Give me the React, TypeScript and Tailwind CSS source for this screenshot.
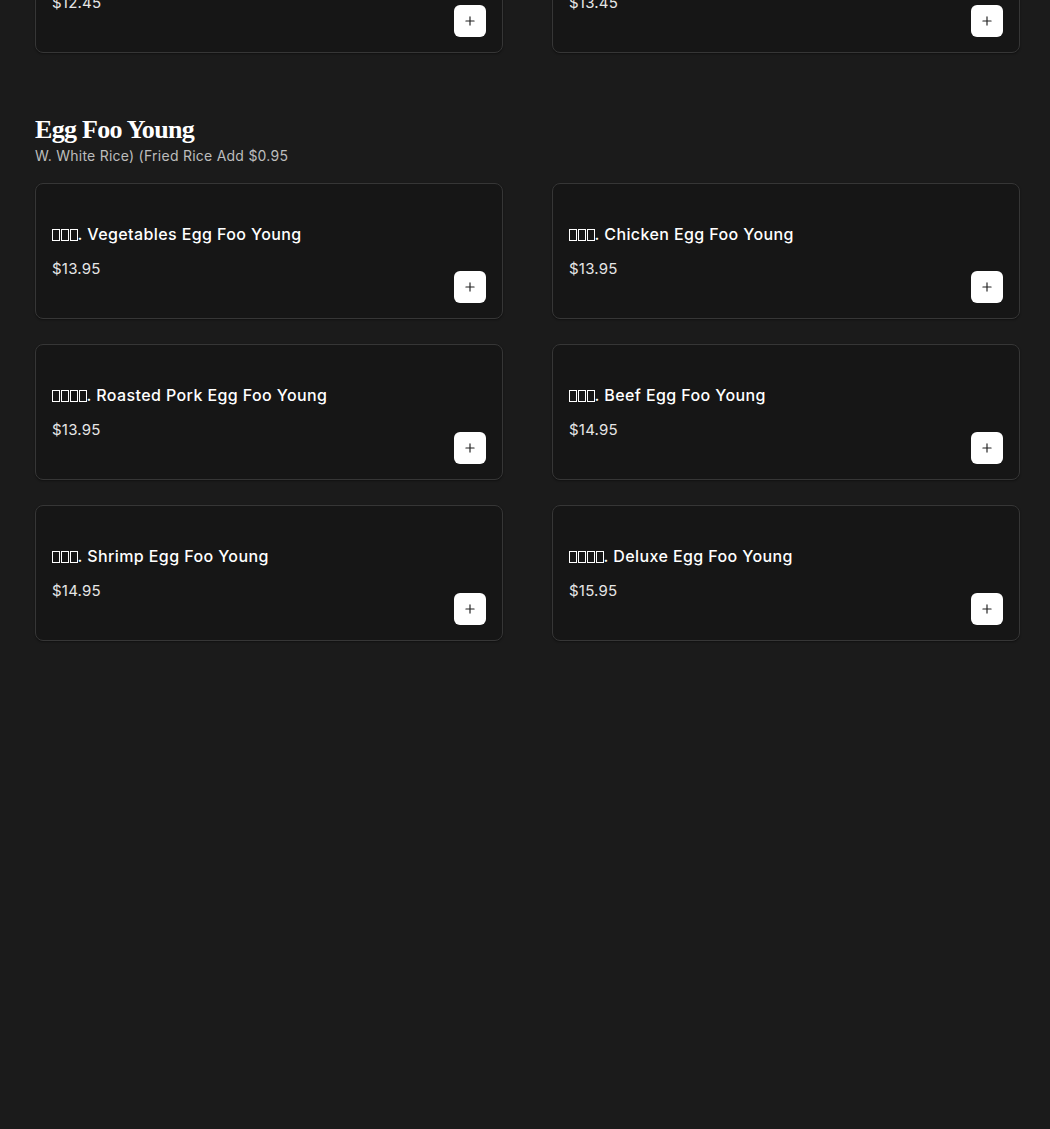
import { Plus } from 'lucide-react'

type Item = { boxes: number; name: string; price: string }

const prevItems: Item[] = [
  { boxes: 0, name: '', price: '$12.45' },
  { boxes: 0, name: '', price: '$13.45' },
]

const items: Item[] = [
  { boxes: 3, name: 'Vegetables Egg Foo Young', price: '$13.95' },
  { boxes: 3, name: 'Chicken Egg Foo Young', price: '$13.95' },
  { boxes: 4, name: 'Roasted Pork Egg Foo Young', price: '$13.95' },
  { boxes: 3, name: 'Beef Egg Foo Young', price: '$14.95' },
  { boxes: 3, name: 'Shrimp Egg Foo Young', price: '$14.95' },
  { boxes: 4, name: 'Deluxe Egg Foo Young', price: '$15.95' },
]

// missing-glyph boxes, as the reference shows them
function Tofu({ count }: { count: number }) {
  return (
    <span className="inline-flex items-end gap-[1.5px] align-[-1px]">
      {Array.from({ length: count }).map((_, i) => (
        <span key={i} className="inline-block w-[7.5px] h-[12px] border-[1.5px] border-white" />
      ))}
    </span>
  )
}

function MenuCard({ item }: { item: Item }) {
  return (
    <div className="h-[136px] bg-[#161616] border border-[#363636] rounded-lg px-4 pt-[38px] pb-[15px] flex justify-between shadow-[0_1px_2px_rgba(0,0,0,0.4)]">
      <div className="flex flex-col">
        <div className="h-6 text-[16px] leading-6 font-medium tracking-[0.4px] text-white whitespace-nowrap">
          {item.boxes > 0 && (
            <>
              <Tofu count={item.boxes} />.{' '}
            </>
          )}
          {item.name}
        </div>
        <div className="mt-[13px] text-[15px] leading-5 tracking-[0.2px] text-[#e6e6e6]">{item.price}</div>
      </div>
      <button className="self-end w-8 h-8 rounded-md bg-white flex items-center justify-center text-[#222]">
        <Plus size={14} strokeWidth={2} />
      </button>
    </div>
  )
}

export default function App() {
  return (
    <div
      className="min-h-[1129px] bg-[#1b1b1b] text-white pl-[35px] pr-[30px] overflow-hidden"
      style={{ fontFamily: 'Inter, "Noto Sans", sans-serif' }}
    >
      <div className="grid grid-cols-2 gap-x-[49px] -mt-[83px]">
        {prevItems.map((it, i) => (
          <MenuCard key={i} item={it} />
        ))}
      </div>

      <div className="mt-[61px]">
        <h2
          className="text-[26px] leading-8 font-bold tracking-[-0.7px] text-white"
          style={{ fontFamily: '"Liberation Serif", "DejaVu Serif", serif' }}
        >
          Egg Foo Young
        </h2>
        <p className="text-[14px] leading-5 tracking-[0.25px] text-[#bdbdbd]">
          W. White Rice) (Fried Rice Add $0.95
        </p>
      </div>

      <div className="grid grid-cols-2 gap-x-[49px] gap-y-[25px] mt-[17px]">
        {items.map((it, i) => (
          <MenuCard key={i} item={it} />
        ))}
      </div>
    </div>
  )
}
